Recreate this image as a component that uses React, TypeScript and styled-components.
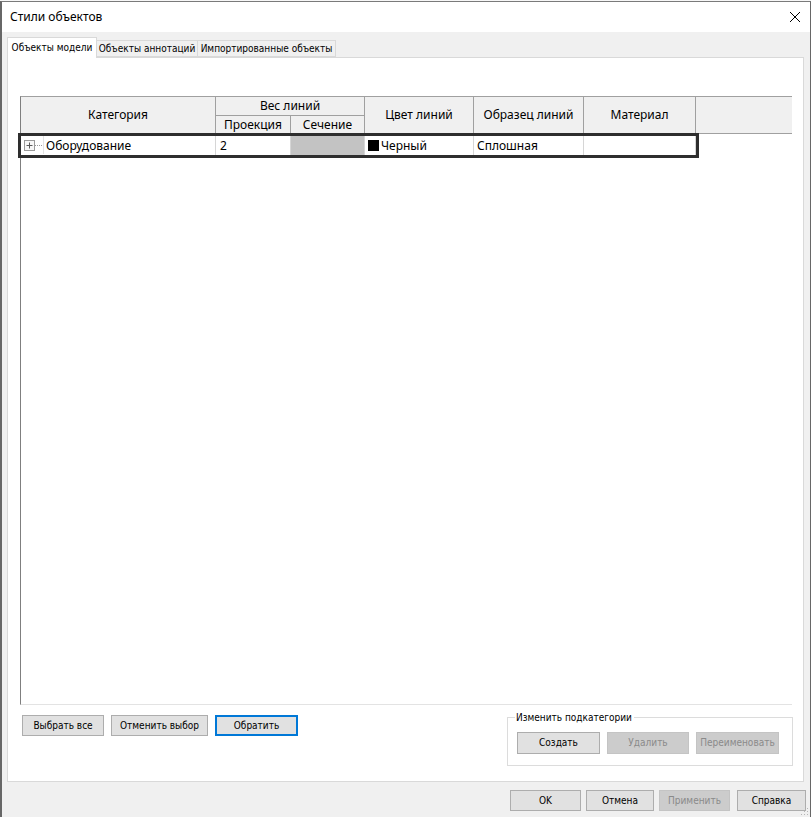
import React from 'react';
import styled, { createGlobalStyle } from 'styled-components';

const Global = createGlobalStyle`
  html, body { margin: 0; padding: 0; background: #ffffff; }
  body { font-family: "Liberation Sans", Arial, sans-serif; }
  * { box-sizing: border-box; }
`;

const uiFont = `"DejaVu Sans Condensed", "DejaVu Sans", "Liberation Sans", sans-serif`;

const Screen = styled.div`
  width: 811px;
  height: 817px;
  padding-top: 1px;
  background: #f7f7f7;
  overflow: hidden;
`;

const Window = styled.div`
  position: relative;
  height: 816px;
  display: flex;
  flex-direction: column;
  border-top: 1px solid #7a7a7a;
  border-left: 2px solid #676767;
  border-right: 1px solid #676767;
  background: #f0f0f0;
`;

const TitleBar = styled.div`
  height: 30px;
  flex: none;
  background: #ffffff;
  display: flex;
  align-items: center;
  justify-content: space-between;
  padding: 0 9px 1px 8px;
  font-family: "Noto Sans", "Open Sans", sans-serif;
  font-size: 12px;
  color: #000;
`;

const CloseBox = styled.div`
  width: 12px;
  height: 12px;
  display: flex;
`;

const Body = styled.div`
  flex: 1;
  display: flex;
  flex-direction: column;
  padding: 5px 0 0 5px;
`;

const TabsRow = styled.div`
  height: 20px;
  display: flex;
  align-items: flex-end;
  position: relative;
  z-index: 1;
`;

const Tab = styled.div<{ $active?: boolean; $w: number }>`
  width: ${(p) => p.$w}px;
  height: ${(p) => (p.$active ? 21 : 17)}px;
  margin-bottom: ${(p) => (p.$active ? -1 : 0)}px;
  background: ${(p) => (p.$active ? '#ffffff' : '#f0f0f0')};
  border: 1px solid #d9d9d9;
  border-bottom: ${(p) => (p.$active ? 'none' : '1px solid #d9d9d9')};
  margin-left: ${(p) => (p.$active ? 0 : -1)}px;
  display: flex;
  align-items: center;
  justify-content: center;
  padding-bottom: ${(p) => (p.$active ? 2 : 0)}px;
  font-family: ${uiFont};
  font-stretch: condensed;
  font-size: 10px;
  color: #000;
  white-space: nowrap;
`;

const Panel = styled.div`
  height: 725px;
  margin-right: 6px;
  background: #ffffff;
  border: 1px solid #d9d9d9;
  padding: 38px 11px 0 12px;
  display: flex;
  flex-direction: column;
`;

const Table = styled.div`
  height: 609px;
  background: #ffffff;
  border-top: 1px solid #a0a0a0;
  border-left: 1px solid #7f7f7f;
  border-bottom: 1px solid #e3e3e3;
  display: flex;
  flex-direction: column;
  font-family: "Noto Sans", "Open Sans", sans-serif;
  font-size: 12px;
  color: #000;
`;

const HeaderGrid = styled.div`
  display: grid;
  grid-template-columns: 195px 75px 74px 109px 110px 112px 1fr;
  grid-template-rows: 19px 18px;
  background: #f0f0f0;
`;

const HeadCell = styled.div<{ $col: string; $row: string; $last?: boolean }>`
  grid-column: ${(p) => p.$col};
  grid-row: ${(p) => p.$row};
  border-right: ${(p) => (p.$last ? 'none' : '1px solid #a0a0a0')};
  border-bottom: 1px solid #a0a0a0;
  display: flex;
  align-items: center;
  justify-content: center;
  padding-bottom: 1px;
  white-space: nowrap;
`;

const DataRow = styled.div`
  margin-top: 2px;
  height: 19px;
  width: 675px;
  display: flex;
  outline: 3px solid #2e2e2e;
  background: #ffffff;
`;

const Cell = styled.div<{ $w: number; $bg?: string; $pl?: number }>`
  width: ${(p) => p.$w}px;
  flex: none;
  height: 100%;
  background: ${(p) => p.$bg || '#ffffff'};
  border-right: 1px solid #d6d6d6;
  display: flex;
  align-items: center;
  padding-left: ${(p) => p.$pl ?? 4}px;
  padding-bottom: 1px;
  white-space: nowrap;
`;

const Expander = styled.div`
  width: 11px;
  height: 11px;
  flex: none;
  border: 1px solid #9a9a9a;
  background: #f7f7f7;
  display: flex;
  align-items: center;
  justify-content: center;
`;

const Dots = styled.div`
  width: 7px;
  flex: none;
  border-top: 1px dotted #9a9a9a;
`;

const TreeSep = styled.div`
  width: 1px;
  align-self: stretch;
  background: #e3e3e3;
  margin: 0 2px 0 1px;
`;

const Swatch = styled.div`
  width: 11px;
  height: 11px;
  flex: none;
  background: #000;
  margin-right: 2px;
`;

const Controls = styled.div`
  margin-top: 6px;
  display: flex;
  justify-content: space-between;
  align-items: flex-start;
`;

const LeftButtons = styled.div`
  display: flex;
  gap: 7px;
  margin: 4px 0 0 2px;
`;

const Btn = styled.button<{ $w: number; $focus?: boolean; $h?: number }>`
  width: ${(p) => p.$w}px;
  height: ${(p) => p.$h ?? 21}px;
  padding: 0 0 1px;
  margin: 0;
  background: #e1e1e1;
  border: 1px solid ${(p) => (p.$focus ? '#0078d7' : '#adadad')};
  box-shadow: ${(p) => (p.$focus ? 'inset 0 0 0 1px #0078d7' : 'none')};
  font-family: ${uiFont};
  font-stretch: condensed;
  font-size: 10px;
  color: #000;
  white-space: nowrap;
  &:disabled {
    background: #cccccc;
    border-color: #c4c4c4;
    color: #8a8a8a;
  }
`;

const Group = styled.fieldset`
  width: 286px;
  height: 55px;
  margin: 0 -1px 0 0;
  padding: 8px 0 0 9px;
  border: 1px solid #dcdcdc;
  display: flex;
  gap: 7px;
  align-items: flex-start;
  min-inline-size: 0;
`;

const Legend = styled.legend`
  padding: 0 2px 0 1px;
  margin-left: -2px;
  font-family: ${uiFont};
  font-stretch: condensed;
  font-size: 10px;
  color: #000;
  line-height: 13px;
`;

const Footer = styled.div`
  display: flex;
  justify-content: flex-end;
  padding: 8px 4px 0 0;
`;

const FooterBtns = styled.div`
  display: flex;
  gap: 5px;
`;

const Grip = styled.div`
  position: absolute;
  right: 1px;
  bottom: 1px;
  width: 8px;
  height: 8px;
  display: flex;
`;

export default function App() {
  return (
    <>
      <Global />
      <Screen>
        <Window>
          <TitleBar>
            <span>Стили объектов</span>
            <CloseBox>
              <svg width="12" height="12" viewBox="0 0 12 12">
                <path d="M1 1 L11 11 M11 1 L1 11" stroke="#000" strokeWidth="1" fill="none" />
              </svg>
            </CloseBox>
          </TitleBar>
          <Body>
            <TabsRow>
              <Tab $active $w={90}>Объекты модели</Tab>
              <Tab $w={102}>Объекты аннотаций</Tab>
              <Tab $w={139}>Импортированные объекты</Tab>
            </TabsRow>
            <Panel>
              <Table>
                <HeaderGrid>
                  <HeadCell $col="1" $row="1 / span 2">Категория</HeadCell>
                  <HeadCell $col="2 / span 2" $row="1">Вес линий</HeadCell>
                  <HeadCell $col="2" $row="2">Проекция</HeadCell>
                  <HeadCell $col="3" $row="2">Сечение</HeadCell>
                  <HeadCell $col="4" $row="1 / span 2">Цвет линий</HeadCell>
                  <HeadCell $col="5" $row="1 / span 2">Образец линий</HeadCell>
                  <HeadCell $col="6" $row="1 / span 2">Материал</HeadCell>
                  <HeadCell $col="7" $row="1 / span 2" $last />
                </HeaderGrid>
                <DataRow>
                  <Cell $w={195} $pl={3}>
                    <Expander>
                      <svg width="9" height="9" viewBox="0 0 9 9">
                        <path d="M1.5 4.5 H7.5 M4.5 1.5 V7.5" stroke="#5a5a5a" strokeWidth="1" fill="none" />
                      </svg>
                    </Expander>
                    <Dots />
                    <TreeSep />
                    Оборудование
                  </Cell>
                  <Cell $w={75}>2</Cell>
                  <Cell $w={74} $bg="#c3c3c3" />
                  <Cell $w={109} $pl={3}>
                    <Swatch />
                    Черный
                  </Cell>
                  <Cell $w={110} $pl={3}>Сплошная</Cell>
                  <Cell $w={112} />
                </DataRow>
              </Table>
              <Controls>
                <LeftButtons>
                  <Btn $w={82}>Выбрать все</Btn>
                  <Btn $w={97}>Отменить выбор</Btn>
                  <Btn $w={83} $focus>Обратить</Btn>
                </LeftButtons>
                <Group>
                  <Legend>Изменить подкатегории</Legend>
                  <Btn $w={83} $h={22}>Создать</Btn>
                  <Btn $w={82} $h={22} disabled>Удалить</Btn>
                  <Btn $w={83} $h={22} disabled>Переименовать</Btn>
                </Group>
              </Controls>
            </Panel>
            <Footer>
              <FooterBtns>
                <Btn $w={71}>OK</Btn>
                <Btn $w={68}>Отмена</Btn>
                <Btn $w={71} disabled>Применить</Btn>
                <Btn $w={69} style={{ marginLeft: 2 }}>Справка</Btn>
              </FooterBtns>
            </Footer>
          </Body>
          <Grip>
            <svg width="8" height="8" viewBox="0 0 8 8">
              <rect x="6" y="0" width="1" height="1" fill="#b5b5b5" />
              <rect x="3" y="3" width="1" height="1" fill="#b5b5b5" />
              <rect x="6" y="3" width="1" height="1" fill="#b5b5b5" />
              <rect x="0" y="6" width="1" height="1" fill="#b5b5b5" />
              <rect x="3" y="6" width="1" height="1" fill="#b5b5b5" />
              <rect x="6" y="6" width="1" height="1" fill="#b5b5b5" />
            </svg>
          </Grip>
        </Window>
      </Screen>
    </>
  );
}
